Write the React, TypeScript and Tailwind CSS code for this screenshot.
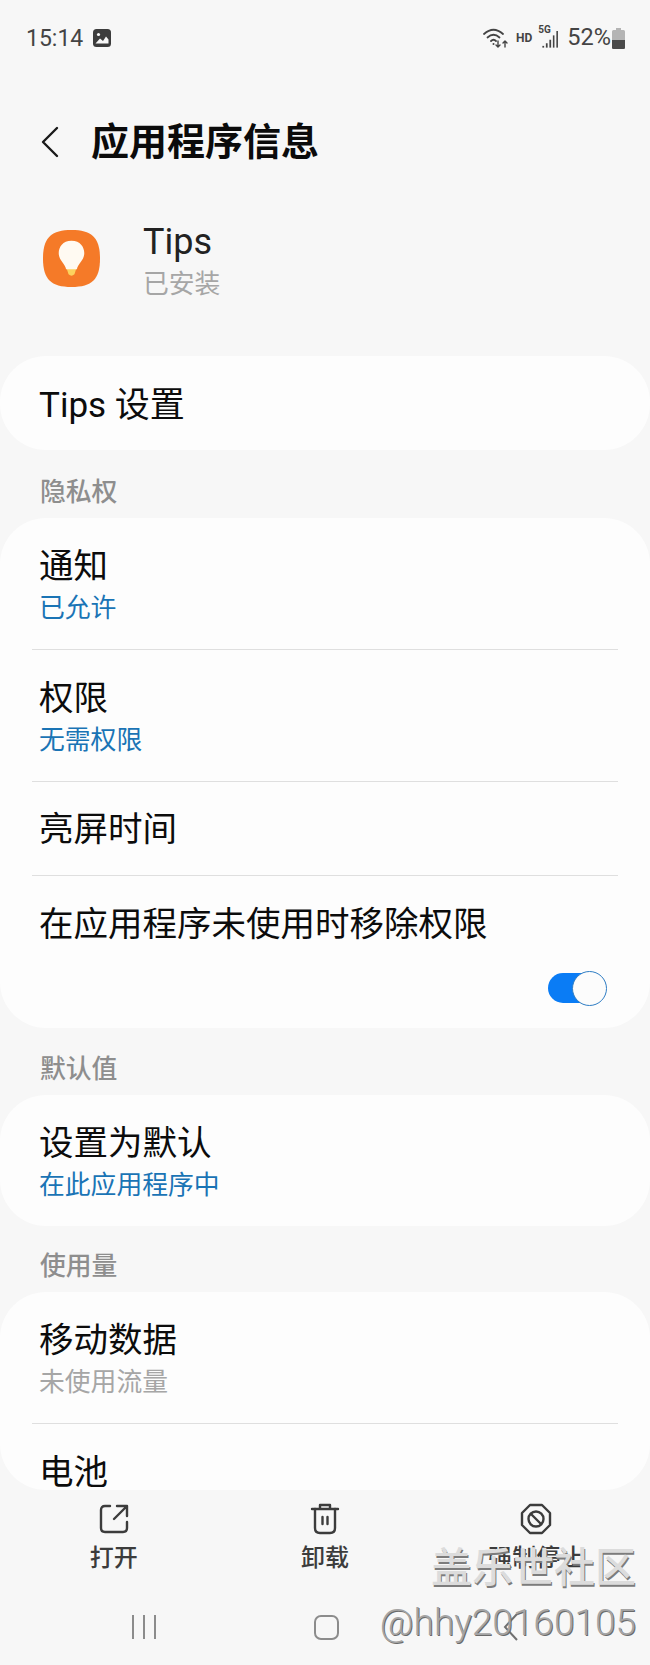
import React from 'react';

const cjk = { fontFamily: 'Roboto, "Noto Sans CJK SC", sans-serif' };

const Divider = () => <div className="mx-[32px] h-px bg-[#dfdfdf]" />;

const TwoLineRow = ({ title, sub, subClass = 'text-[#1a74b5]' }: { title: string; sub: string; subClass?: string }) => (
  <div className="h-[131px] pl-[39px] pt-[25px]">
    <div className="text-[34.500px] leading-[46px] text-[#0c0c0c]">{title}</div>
    <div className={`text-[25.800px] leading-[38px] ${subClass}`}>{sub}</div>
  </div>
);

const SectionLabel = ({ text, className }: { text: string; className: string }) => (
  <div className={`pl-[40px] text-[25.800px] font-medium leading-[36px] text-[#8e8e8e] ${className}`}>{text}</div>
);

const ActionItem = ({ icon, label }: { icon: React.ReactNode; label: string }) => (
  <div className="flex w-[212px] flex-col items-center">
    <div className="h-[34px] w-[34px]">{icon}</div>
    <div className="mt-[5px] text-[24px] font-medium leading-[34px] text-[#3c3c3c]">{label}</div>
  </div>
);

const StatusIcons = () => (
  <div className="flex items-center text-[#444]">
    <svg width="26" height="22" viewBox="0 0 26 22" fill="none" stroke="currentColor" strokeWidth="1.8" strokeLinecap="round">
      <path d="M1 7 Q10.5 -1.5 20 7" />
      <path d="M4.5 10.5 Q10.5 5 16.500 10.5" />
      <path d="M8 14 Q10.500 11.500 13 14" />
      <circle cx="10.500" cy="17" r="1" fill="currentColor" stroke="none" />
      <path d="M15 14 V20 M13 18 L15 20 L17 18" strokeWidth="1.4" />
      <path d="M22 20 V14 M20 16 L22 14 L24 16" strokeWidth="1.4" />
    </svg>
    <span className="ml-[7px] text-[12px] font-bold leading-none">HD</span>
    <div className="relative ml-[6px] h-[26px] w-[21px]">
      <span className="absolute left-0 top-0 text-[10px] font-bold leading-none">5G</span>
      <svg className="absolute inset-0" width="21" height="26" viewBox="0 0 24 26" fill="currentColor">
        <rect x="5" y="22" width="2" height="2" />
        <rect x="9" y="19" width="2" height="5" />
        <rect x="13" y="15" width="2" height="9" />
        <rect x="17" y="10" width="1.800" height="14" />
        <rect x="21" y="5" width="1.800" height="19" />
      </svg>
    </div>
    <span className="ml-[8px] text-[23.500px] leading-none text-[#444]">52%</span>
    <svg className="ml-[1px]" width="13" height="21" viewBox="0 0 13 21">
      <path d="M4 0 H9 V2 H11.500 Q13 2 13 3.500 V19.500 Q13 21 11.500 21 H1.500 Q0 21 0 19.500 V3.500 Q0 2 1.500 2 H4 Z" fill="#b4b4b4" />
      <path d="M0 12 H13 V19.500 Q13 21 11.500 21 H1.500 Q0 21 0 19.500 Z" fill="#4a4a4a" />
    </svg>
  </div>
);

export default function App() {
  return (
    <div className="relative h-[1665px] w-[650px] overflow-hidden bg-[#f7f7f7]" style={cjk}>
      {/* status bar */}
      <div className="flex h-[75px] items-center justify-between pl-[26px] pr-[25px] pt-[1px]">
        <div className="flex items-center">
          <span className="text-[23px] leading-none text-[#444]">15:14</span>
          <svg className="ml-[10px]" width="18" height="18" viewBox="0 0 18 18">
            <rect width="18" height="18" rx="3.500" fill="#3c3c3c" />
            <circle cx="5.500" cy="5.500" r="1.600" fill="#f7f7f7" />
            <path d="M2.500 14.500 L7 9.500 L10 12 L13 7.500 L15.500 10.500 V14.500 Z" fill="#f7f7f7" />
          </svg>
        </div>
        <StatusIcons />
      </div>

      {/* header */}
      <div className="mt-[41px] flex h-[52px] items-center pl-[41px]">
        <svg width="18" height="32" viewBox="0 0 18 32" fill="none" stroke="#1a1a1a" strokeWidth="2.400" strokeLinecap="round" strokeLinejoin="round">
          <path d="M16 2 L2 16 L16 30" />
        </svg>
        <h1 className="ml-[32px] text-[38px] font-bold leading-none text-[#0b0b0b]">应用程序信息</h1>
      </div>

      {/* app info */}
      <div className="mt-[51px] flex h-[90px] pl-[43px]">
        <svg className="mt-[11px]" width="57" height="57" viewBox="0 0 58 58">
          <path d="M29 0 C50 0 58 8 58 29 C58 50 50 58 29 58 C8 58 0 50 0 29 C0 8 8 0 29 0 Z" fill="#f57a28" />
          <path d="M24 39 H34 L32 45 Q29 48 26 45 Z" fill="#fcd25e" />
          <path d="M29 11 C38 11 42 17.500 42 23.500 C42 31 35.500 34 34.500 40 H23.500 C22.500 34 16 31 16 23.500 C16 17.500 20 11 29 11 Z" fill="#fffaf2" />
        </svg>
        <div className="ml-[43px]">
          <div className="text-[36px] leading-[46px] text-[#222]">Tips</div>
          <div className="pt-[1px] text-[25.800px] leading-[36px] text-[#a6a6a6]">已安装</div>
        </div>
      </div>

      {/* Tips 设置 */}
      <div className="mt-[47px] flex h-[94px] items-center rounded-[46px] bg-[#fdfdfd] pl-[39px] pt-[4px]">
        <span className="text-[35px] leading-none text-[#0c0c0c]">Tips 设置</span>
      </div>

      <SectionLabel text="隐私权" className="mt-[24px]" />

      <div className="mt-[8px] rounded-[46px] bg-[#fdfdfd]">
        <TwoLineRow title="通知" sub="已允许" />
        <Divider />
        <TwoLineRow title="权限" sub="无需权限" />
        <Divider />
        <div className="flex h-[93px] items-center pl-[39px] pt-[1px]">
          <span className="text-[34.500px] leading-none text-[#0c0c0c]">亮屏时间</span>
        </div>
        <Divider />
        <div className="relative h-[152px] pl-[39px] pt-[25px]">
          <div className="text-[34.500px] leading-[46px] text-[#0c0c0c]">在应用程序未使用时移除权限</div>
          <div className="absolute left-[548px] top-[97px] h-[30px] w-[58px] rounded-full bg-[#0a7cf5]" />
          <div className="absolute left-[572px] top-[95px] h-[35px] w-[35px] rounded-full border-[1.500px] border-[#2f7dc4] bg-[#fcfcfc]" />
        </div>
      </div>

      <SectionLabel text="默认值" className="mt-[23px]" />

      <div className="mt-[8px] rounded-[46px] bg-[#fdfdfd]">
        <TwoLineRow title="设置为默认" sub="在此应用程序中" />
      </div>

      <SectionLabel text="使用量" className="mt-[22px]" />

      <div className="mt-[8px] h-[198px] overflow-hidden rounded-b-[46px] rounded-t-[46px] bg-[#fdfdfd]">
        <TwoLineRow title="移动数据" sub="未使用流量" subClass="text-[#a6a6a6]" />
        <Divider />
        <div className="pl-[39px] pt-[30px] text-[34.500px] leading-[36px] text-[#0c0c0c]">电池</div>
      </div>

      {/* bottom actions */}
      <div className="mt-[12px] flex justify-between pl-[8px] pr-[8px]">
        <ActionItem
          label="打开"
          icon={
            <svg width="34" height="34" viewBox="0 0 34 34" fill="none" stroke="#3c3c3c" strokeWidth="2.400" strokeLinecap="round" strokeLinejoin="round">
              <path d="M13 4 H8 Q4 4 4 8 V26 Q4 30 8 30 H26 Q30 30 30 26 V20" />
              <path d="M17 17 L30 4 M20 4 H30 V14" />
            </svg>
          }
        />
        <ActionItem
          label="卸载"
          icon={
            <svg width="34" height="34" viewBox="0 0 34 34" fill="none" stroke="#3c3c3c" strokeWidth="2.400" strokeLinecap="round" strokeLinejoin="round">
              <path d="M4 7 H30 M12 7 V3 H22 V7" />
              <path d="M7 7 V26 Q7 31 12 31 H22 Q27 31 27 26 V7" />
              <path d="M14.500 15 V22 M19.500 15 V22" />
            </svg>
          }
        />
        <ActionItem
          label="强制停止"
          icon={
            <svg width="34" height="34" viewBox="0 0 34 34" fill="none" stroke="#3c3c3c" strokeWidth="2.400" strokeLinecap="round" strokeLinejoin="round">
              <path d="M11 3 H23 L31 11 V23 L23 31 H11 L3 23 V11 Z" />
              <circle cx="17" cy="17" r="7.500" />
              <path d="M12 12 L22 22" />
            </svg>
          }
        />
      </div>

      {/* nav bar */}
      <div className="absolute bottom-[24px] left-0 flex w-full items-center">
        <svg className="ml-[131px]" width="26" height="24" viewBox="0 0 26 24" stroke="#8c8c8c" strokeWidth="2">
          <path d="M2 0 V24 M13 0 V24 M24 0 V24" />
        </svg>
        <div className="ml-[157px] h-[25px] w-[25px] rounded-[7px] border-2 border-[#8c8c8c]" />
        <svg className="ml-[164px]" width="16" height="28" viewBox="0 0 16 28" fill="none" stroke="#707070" strokeWidth="2">
          <path d="M14 1 L2 14 L14 27" />
        </svg>
      </div>

      {/* watermark */}
      <div className="absolute bottom-[76px] right-[14px] text-[41px] font-medium leading-none text-[#dcdcdc] [text-shadow:1px_2px_0_#7c7c7c]">盖乐世社区</div>
      <div className="absolute bottom-[24px] right-[14px] text-[37px] font-light leading-none text-[#a4a4a4] [text-shadow:1px_1px_0_#6a6a6a]">@hhy20160105</div>
    </div>
  );
}
